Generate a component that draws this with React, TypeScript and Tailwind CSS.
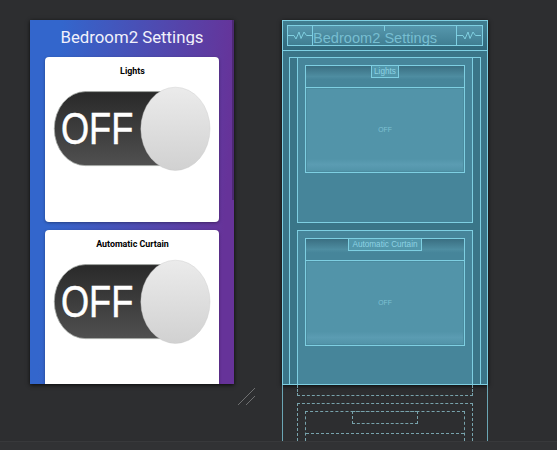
import React from "react";

function Toggle({ id }: { id: string }) {
  return (
    <svg className="block h-[88px] w-[174px]" viewBox="0 0 174 88">
      <defs>
        <linearGradient id={`${id}-track`} x1="0" y1="0" x2="0" y2="1">
          <stop offset="0" stopColor="#292929" />
          <stop offset="1" stopColor="#505050" />
        </linearGradient>
        <linearGradient id={`${id}-knob`} x1="0" y1="0" x2="0" y2="1">
          <stop offset="0" stopColor="#ebebeb" />
          <stop offset="1" stopColor="#d1d1d1" />
        </linearGradient>
      </defs>
      <rect x="9.3" y="7.6" width="142" height="74" rx="31" ry="37" fill={`url(#${id}-track)`} stroke="#a5a8a5" strokeWidth="0.8" />
      <text
        transform="translate(15.9 59.5) scale(.813 1)"
        fontFamily="'Liberation Sans', sans-serif"
        fontSize="44.5"
        fill="#fff"
        stroke="#fff"
        strokeWidth="0.5"
      >
        OFF
      </text>
      <ellipse cx="130.4" cy="44.8" rx="34.6" ry="41.6" fill={`url(#${id}-knob)`} stroke="#c8c8c8" strokeWidth="0.4" />
    </svg>
  );
}

function PreviewCard({ id, title, className }: { id: string; title: string; className: string }) {
  return (
    <div className={`w-[174px] shrink-0 bg-white shadow-[0_1px_3px_rgba(0,0,0,0.35)] ${className}`}>
      <div className="h-[27px] pl-px pt-[8px] text-center text-[8.9px] font-bold leading-[13px] text-black">{title}</div>
      <Toggle id={id} />
    </div>
  );
}

function DesignPreview() {
  return (
    <div className="relative flex h-[364px] w-[204px] flex-col items-center overflow-hidden bg-linear-[94deg] from-[#3366cc] from-14% to-[#663399] to-91% font-['Roboto',sans-serif]">
      <div className="mt-[7px] h-[18px] w-[174px] shrink-0 overflow-hidden whitespace-nowrap text-center text-[16.8px] leading-[20px] text-[#f1f1fb]">
        Bedroom2 Settings
      </div>
      <div className="mt-[12px] flex flex-col gap-[8px]">
        <PreviewCard id="lights" title="Lights" className="h-[165px] rounded-[4px]" />
        <PreviewCard id="curtain" title="Automatic Curtain" className="h-[165px] rounded-t-[4px]" />
      </div>
      <div className="absolute right-0 top-0 h-[180px] w-[2px] bg-[#4c2873]" />
    </div>
  );
}

function Spring() {
  return (
    <svg className="block h-[19px] w-[24px] shrink-0" viewBox="0 0 24 19" fill="none" stroke="#7fcfe0" strokeWidth="1">
      <path d="M0 9.5H6L8 13L11 6L13 12.5L16 6L18.5 9.5H24" />
    </svg>
  );
}

function BlueprintCard({ title, card, label }: { title: string; card: string; label: string }) {
  return (
    <div className={`ml-[7px] w-[176px] shrink-0 border-x border-t border-[#7ecfe2] bg-[#46859a] p-[7px] ${card}`}>
      <div className="h-[108px] w-[160px] border border-[#7ecfe2]">
        <div className="flex h-[22px] items-start justify-center border-b border-[#7ecfe2] bg-linear-to-b from-[#3a6f82] via-[#4e8da1] via-50% to-[#46859a] to-65%">
          <div
            className={`-mt-px h-[13px] overflow-hidden whitespace-nowrap border border-[#7ecfe2] bg-[#5297ab] text-center text-[8.2px] leading-[11px] text-[#8dd2e3] ${label}`}
          >
            {title}
          </div>
        </div>
        <div className="flex h-[84px] items-center justify-center border border-[#4b8b9f] bg-linear-to-b from-[#5294a9] from-85% via-[#5b9cb2] via-92% to-[#5294a9] text-[6.8px] text-[#7fc2d3]">
          OFF
        </div>
      </div>
    </div>
  );
}

function Blueprint() {
  return (
    <div className="w-[206px]">
      <div className="h-[365px] border border-[#7ecfe2] bg-[#3a7588] shadow-[0_1px_4px_rgba(0,0,0,0.8)]">
        <div className="h-[30px] border-b border-[#7ecfe2] bg-linear-to-b from-[#407d90] to-[#31697c] px-[4px] pt-[4px]">
          <div className="flex h-[21px] w-[196px] border border-[#7ecfe2] bg-linear-to-b from-[#5697ad] to-[#407e92]">
            <Spring />
            <div className="relative h-[19px] w-[145px] shrink-0 overflow-hidden whitespace-nowrap border-x border-[#7ecfe2] text-[14.6px] leading-[24px] text-[#77bed1]">
              <span>Bedroom2 Settings</span>
              <div className="absolute left-[71px] top-0 h-[5px] w-px bg-[#7ecfe2]" />
            </div>
            <Spring />
          </div>
        </div>
        <div className="ml-[6px] mt-[6px] flex h-[327px] w-[192px] flex-col gap-[7px] border-x border-t border-[#7ecfe2]">
          <BlueprintCard title="Lights" card="-mt-px h-[166px] border-b" label="w-[28px]" />
          <BlueprintCard title="Automatic Curtain" card="h-[154px]" label="w-[74px]" />
        </div>
      </div>
      <div className="h-[56px] overflow-hidden border-x border-[#6ba6b4] pl-[14px]">
        <div className="h-[11px] w-[176px] border-x border-b border-dashed border-[#78a3ac]" />
        <div className="mt-[7px] h-[38px] w-[176px] border-x border-t border-dashed border-[#78a3ac] px-[7px] pt-[7px]">
          <div className="h-[30px] w-[160px] border-x border-t border-dashed border-[#78a3ac]">
            <div className="flex h-[22px] items-start justify-center border-b border-dashed border-[#78a3ac]">
              <div className="-mt-px h-[13px] w-[66px] border border-dashed border-[#78a3ac]" />
            </div>
          </div>
        </div>
      </div>
    </div>
  );
}

export default function App() {
  return (
    <div className="flex h-[450px] w-[557px] flex-col overflow-hidden bg-[#2d2e30] font-['Liberation_Sans',sans-serif]">
      <div className="flex h-[441px] shrink-0 pl-[30px] pt-[20px]">
        <div className="h-[364px] w-[204px] shadow-[0_1px_4px_rgba(0,0,0,0.8)]">
          <DesignPreview />
        </div>
        <svg className="ml-[4px] mt-[368px] block h-[18px] w-[18px]" viewBox="0 0 18 18" stroke="#808183" strokeWidth="0.8">
          <path d="M0 17L17 0M8 17L17 8" />
        </svg>
        <div className="ml-[26px]">
          <Blueprint />
        </div>
      </div>
      <div className="h-[9px] border-t border-[#38393b] bg-[#313234]" />
    </div>
  );
}
